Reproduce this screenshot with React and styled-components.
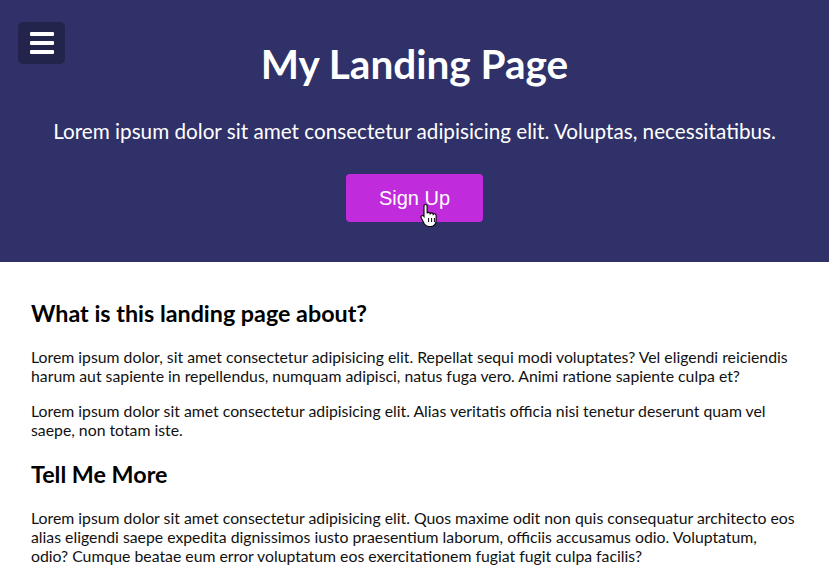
import React from "react";
import styled, { createGlobalStyle } from "styled-components";

const GlobalStyle = createGlobalStyle`
  * { box-sizing: border-box; }
  body {
    margin: 0;
    font-family: Lato, "Open Sans", sans-serif;
    color: #111;
    background: #fff;
  }
`;

const Header = styled.header`
  position: relative;
  height: 262px;
  background-color: #2f3168;
  color: #fff;
  display: flex;
  flex-direction: column;
  align-items: center;
  padding-top: 40px;
`;

const MenuButton = styled.button`
  position: absolute;
  top: 22px;
  left: 18px;
  width: 47px;
  height: 42px;
  border: none;
  border-radius: 5px;
  background-color: #22244b;
  display: flex;
  flex-direction: column;
  justify-content: center;
  align-items: center;
  gap: 5px;
  padding: 0;
`;

const MenuLine = styled.span`
  display: block;
  width: 24px;
  height: 4px;
  border-radius: 1px;
  background: #fff;
`;

const Title = styled.h1`
  margin: 0;
  font-size: 40.5px;
  font-weight: 700;
  line-height: 1.2;
`;

const Subtitle = styled.p`
  margin: 30px 0 0;
  font-size: 20.7px;
  line-height: 1.2;
`;

const SignUp = styled.button`
  position: relative;
  margin-top: 31px;
  width: 137px;
  height: 48px;
  border: none;
  border-radius: 4px;
  background-color: #c02bdb;
  color: #fff;
  font-family: "Liberation Sans", Arial, sans-serif;
  font-size: 20px;
  cursor: pointer;
`;

const Cursor = styled.svg`
  position: absolute;
  left: 74px;
  top: 29px;
  width: 18px;
  height: 24px;
`;

const Main = styled.main`
  padding: 37px 31px 0;
`;

const Heading = styled.h2`
  margin: 0 0 20px;
  font-size: 23.3px;
  font-weight: 700;
  line-height: 28px;
  color: #000;
`;

const Para = styled.p`
  margin: 0 0 16px;
  font-size: 15.8px;
  line-height: 19px;
  color: #111;
`;

const Section = styled.section`
  & + & {
    margin-top: 21px;
  }
`;

const HandCursor = () => (
  <Cursor viewBox="0 0 18 24">
    <path
      d="M5.5 1.5c1 0 1.6.7 1.6 1.6v7.2c.3-.6.9-.9 1.5-.9.9 0 1.5.6 1.6 1.3.3-.5.8-.8 1.4-.8.9 0 1.5.6 1.6 1.4.3-.4.8-.6 1.3-.6 1 0 1.6.8 1.6 1.7v5.2c0 3.3-2.4 5.9-5.6 5.9H9c-2 0-3.4-.9-4.6-2.5L1.3 15c-.5-.7-.4-1.6.3-2.1.7-.5 1.6-.4 2.2.3l.2.3V3.1c0-.9.6-1.600 1.5-1.6z"
      fill="#fff"
      stroke="#000"
      strokeWidth="1.1"
    />
    <path d="M8.6 15v4M11.6 15v4M14.4 15v4" stroke="#000" strokeWidth="1" />
  </Cursor>
);

const App = () => {
  return (
    <>
      <GlobalStyle />
      <Header>
        <MenuButton aria-label="menu">
          <MenuLine />
          <MenuLine />
          <MenuLine />
        </MenuButton>
        <Title>My Landing Page</Title>
        <Subtitle>
          Lorem ipsum dolor sit amet consectetur adipisicing elit. Voluptas, necessitatibus.
        </Subtitle>
        <SignUp>
          Sign Up
          <HandCursor />
        </SignUp>
      </Header>
      <Main>
        <Section>
          <Heading>What is this landing page about?</Heading>
          <Para>
            Lorem ipsum dolor, sit amet consectetur adipisicing elit. Repellat sequi modi
            voluptates? Vel eligendi reiciendis harum aut sapiente in repellendus, numquam
            adipisci, natus fuga vero. Animi ratione sapiente culpa et?
          </Para>
          <Para>
            Lorem ipsum dolor sit amet consectetur adipisicing elit. Alias veritatis officia
            nisi tenetur deserunt quam vel saepe, non totam iste.
          </Para>
        </Section>
        <Section>
          <Heading>Tell Me More</Heading>
          <Para>
            Lorem ipsum dolor sit amet consectetur adipisicing elit. Quos maxime odit non quis
            consequatur architecto eos alias eligendi saepe expedita dignissimos iusto
            praesentium laborum, officiis accusamus odio. Voluptatum, odio? Cumque beatae eum
            error voluptatum eos exercitationem fugiat fugit culpa facilis?
          </Para>
        </Section>
      </Main>
    </>
  );
};

export default App;
